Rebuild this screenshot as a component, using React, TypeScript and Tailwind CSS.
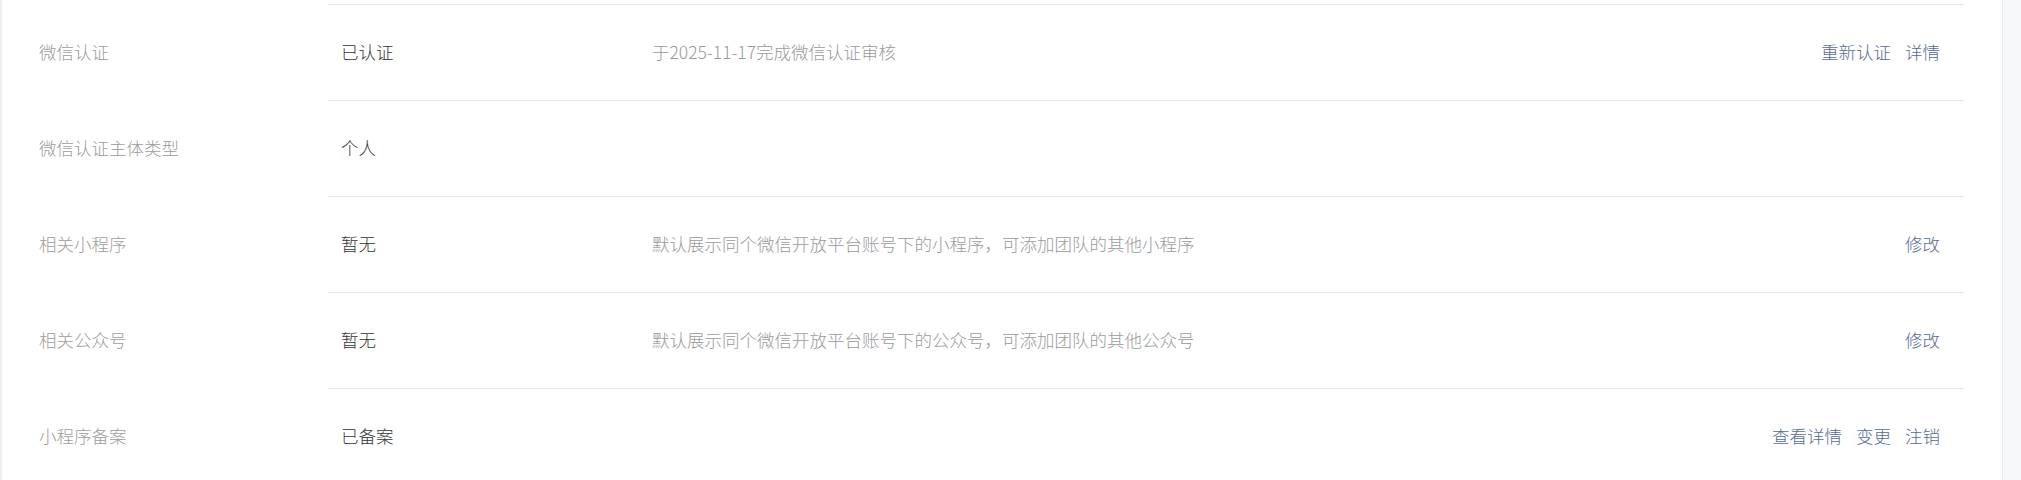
import React from "react";

type Row = {
    label: string;
    value: string;
    desc?: string;
    actions?: string[];
};

const rows: Row[] = [
    { label: "微信认证", value: "已认证", desc: "于2025-11-17完成微信认证审核", actions: ["重新认证", "详情"] },
    { label: "微信认证主体类型", value: "个人" },
    { label: "相关小程序", value: "暂无", desc: "默认展示同个微信开放平台账号下的小程序，可添加团队的其他小程序", actions: ["修改"] },
    { label: "相关公众号", value: "暂无", desc: "默认展示同个微信开放平台账号下的公众号，可添加团队的其他公众号", actions: ["修改"] },
    { label: "小程序备案", value: "已备案", actions: ["查看详情", "变更", "注销"] },
];

export default function App() {
    return (
        <div
            className="w-[2021px] h-[480px] overflow-hidden flex bg-[#f6f8f9] text-[17.5px] font-light"
            style={{ fontFamily: '"Noto Sans CJK SC", "Noto Sans", sans-serif' }}
        >
            {/* 主面板 */}
            <div className="w-[2003px] shrink-0 bg-white border-l-2 border-l-[#eeeff1] border-r border-r-[#e9ebee] pt-[4px] pr-[38px]">
                {rows.map((row) => (
                    <div key={row.label} className="flex h-[96px]">
                        <div className="w-[326px] shrink-0 pl-[37px] flex items-center text-[#9c9c9c]">
                            {row.label}
                        </div>
                        <div className="flex-1 flex items-center border-t border-[#e7e7eb] pl-[13px] pr-[24px]">
                            <div className="w-[311px] shrink-0 text-[#353535]">{row.value}</div>
                            <div className="flex-1 text-[#9a9a9a]">{row.desc}</div>
                            {row.actions && (
                                <div className="flex gap-[14px] text-[#576b95]">
                                    {row.actions.map((a) => (
                                        <span key={a} className="cursor-pointer">{a}</span>
                                    ))}
                                </div>
                            )}
                        </div>
                    </div>
                ))}
            </div>
        </div>
    );
}
